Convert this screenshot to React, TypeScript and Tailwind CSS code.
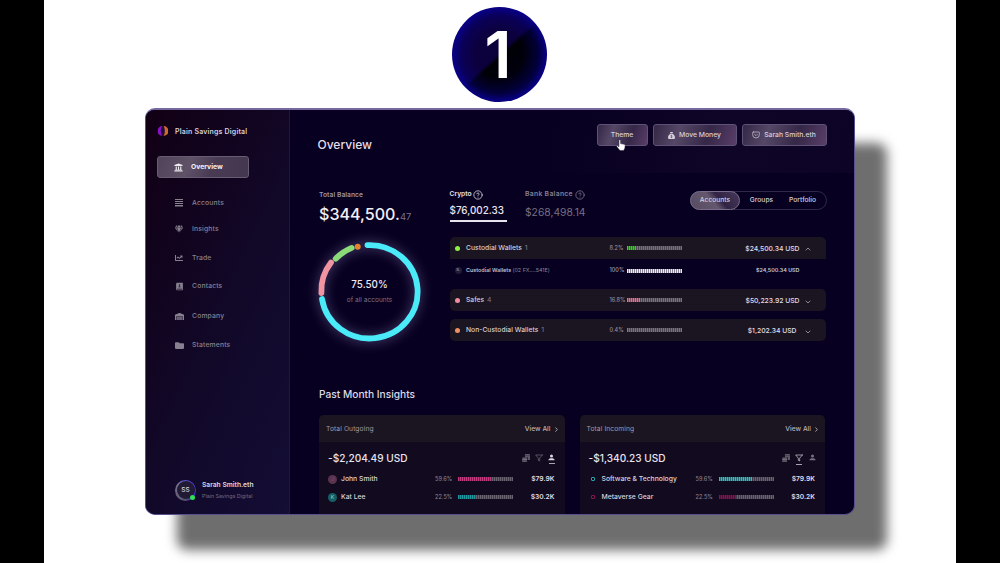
import React, { useState } from 'react';
import { FaChartLine, FaFolder, FaGem, FaUniversity, FaWarehouse } from 'react-icons/fa';
import { FaSackDollar } from 'react-icons/fa6';
import { RiContactsBook2Fill } from 'react-icons/ri';
import { FiFilter, FiPocket } from 'react-icons/fi';
import { ChevronDown, ChevronRight, ChevronUp, CircleHelp } from 'lucide-react';

// ==================== ICONS ====================
const LinesIcon = () => (
  <svg viewBox="0 0 8 8" className="h-[8px] w-[8px] shrink-0" fill="currentColor">
    <rect y="0" width="8" height="1" />
    <rect y="2" width="8" height="1" />
    <rect y="4" width="8" height="1" />
    <rect y="6" width="8" height="1" />
    <rect y="7.500" width="8" height="0.500" />
  </svg>
);

const CoinsIcon = ({ className }) => (
  <svg viewBox="0 0 16 16" className={className} fill="currentColor">
    <rect x="5.500" y="0.500" width="10.500" height="2.600" rx="1.300" />
    <path d="M6 3.500h10v8.500h-4.500V6.500H6z" opacity="0.75" />
    <rect x="0.500" y="7" width="10" height="2.400" rx="1.200" />
    <rect x="0" y="9.900" width="10.500" height="2.400" rx="1.200" />
    <rect x="0" y="12.900" width="10.500" height="2.600" rx="1.300" />
  </svg>
);

const PersonIcon = ({ className }) => (
  <svg viewBox="0 0 16 16" className={className} fill="currentColor">
    <circle cx="8" cy="4.500" r="3.500" />
    <path d="M1 14c0-3 3-4.500 7-4.500s7 1.500 7 4.500z" />
  </svg>
);

const HandCursor = () => (
  <svg viewBox="0 0 16 20" className="absolute left-[18px] top-[14px] h-[12px] w-[10px]">
    <path
      d="M5 1.500c1-.800 2.300 0 2.300 1.200v5l6 1.200c1.200.300 1.800 1.200 1.700 2.400l-.800 4.700L12.500 19H6.300L1 12.800c-.500-1 .600-2 1.600-1.400L4.600 13V2.600c0-.500.100-.800.400-1.100z"
      fill="#fff"
      stroke="#2b1c3c"
      strokeWidth="0.8"
    />
  </svg>
);

const Logo = () => (
  <svg viewBox="0 0 20 20" className="h-[10px] w-[10px]">
    <circle cx="10" cy="10" r="9" fill="#1d0c3c" />
    <path d="M9 0A10 10 0 0 0 9 20C4.500 15 4.500 5 9 0z" fill="#8a12c4" />
    <path d="M11 0a10 10 0 0 1 0 20c3.500-5 3.500-15 0-20z" fill="#cf6a2c" />
  </svg>
);

// ==================== DATA ====================
const navItems = [
  { name: 'Accounts', icon: LinesIcon, size: 8, space: 'mt-[19px]' },
  { name: 'Insights', icon: FaGem, size: 8, space: 'mt-[14px]' },
  { name: 'Trade', icon: FaChartLine, size: 8, space: 'mt-[17px]' },
  { name: 'Contacts', icon: RiContactsBook2Fill, size: 9, space: 'mt-4' },
  { name: 'Company', icon: FaWarehouse, size: 9, space: 'mt-[18px]' },
  { name: 'Statements', icon: FaFolder, size: 9, space: 'mt-[17px]' },
];

const wallets = [
  { name: 'Custodial Wallets', count: 1, percent: 8.2, fill: 18, dot: 'bg-[#8df046]', bar: 'bg-[#35d321]', amount: '$24,500.34 USD' },
  { name: 'Safes', count: 4, percent: 16.8, fill: 25, dot: 'bg-[#f08ba0]', bar: 'bg-[#dd7492]', amount: '$50,223.92 USD' },
  { name: 'Non-Custodial Wallets', count: 1, percent: 0.4, fill: 3, dot: 'bg-[#ee8f62]', bar: 'bg-[#a0706a]', amount: '$1,202.34 USD' },
];

const insights = [
  {
    title: 'Total Outgoing',
    amount: '-$2,204.49 USD',
    active: 'person',
    rows: [
      { name: 'John Smith', initial: 'J', badge: 'bg-[#59344f] text-[#b0356b]', percent: '59.6%', fill: 60, bar: 'bg-[#bf3b7c]', value: '$79.9K' },
      { name: 'Kat Lee', initial: 'K', badge: 'bg-[#155f62] text-[#8fd6d0]', percent: '22.5%', fill: 33, bar: 'bg-[#2097a0]', value: '$30.2K' },
    ],
  },
  {
    title: 'Total Incoming',
    amount: '-$1,340.23 USD',
    active: 'filter',
    rows: [
      { name: 'Software & Technology', ring: 'border-[#27a3a8]', percent: '59.6%', fill: 61, bar: 'bg-[#37bdbb]', value: '$79.9K' },
      { name: 'Metaverse Gear', ring: 'border-[#8a1450]', percent: '22.5%', fill: 32, bar: 'bg-[#86124e]', value: '$30.2K' },
    ],
  },
];

// ==================== SMALL PARTS ====================
const TickBar = ({ fill, color, rest = 'bg-[#77717e]' }) => (
  <div className="flex h-[4px] w-[55px] mask-[repeating-linear-gradient(90deg,#000_0_1px,rgba(0,0,0,0.55)_1px_2px)]">
    <div className={color} style={{ width: `${fill}%` }} />
    <div className={`flex-1 ${rest}`} />
  </div>
);

const Donut = () => (
  <div className="relative h-[120px] w-[120px]">
    <svg viewBox="0 0 120 120" className="h-full w-full overflow-visible" fill="none">
      <defs>
        <filter id="glow" x="-30%" y="-30%" width="160%" height="160%">
          <feGaussianBlur stdDeviation="6" />
        </filter>
      </defs>
      <ellipse cx="60.400" cy="61" rx="48" ry="47" stroke="#a090d0" strokeOpacity="0.5" strokeWidth="6" filter="url(#glow)" />
      <g strokeWidth="5.800" strokeLinecap="round">
        <path d="M58.500 14.100A48.100 46.700 0 1 1 13 68" stroke="#4beaf8" />
        <path d="M12.400 62A48.100 46.700 0 0 1 22 31.500" stroke="#f094a2" />
        <path d="M26.700 27.700A48.100 46.700 0 0 1 42.700 16.900" stroke="#8bdc79" />
      </g>
      <circle cx="48.700" cy="15.700" r="3" fill="#e5822c" />
    </svg>
    <div className="absolute inset-0 flex flex-col items-center pt-[48px] pl-px">
      <span className="text-[9.8px] leading-[12px] font-medium text-[#eeeaf4]">75.50%</span>
      <span className="mt-[5px] text-[6.6px] leading-[9px] text-[#77708a]">of all accounts</span>
    </div>
  </div>
);

// ==================== SIDEBAR ====================
const Sidebar = () => (
  <aside className="flex w-[144px] shrink-0 flex-col border-r border-[#1f1838] bg-[linear-gradient(115deg,#120014_0%,#11041f_30%,#120a2c_65%,#140d34_100%)]">
    <div className="mt-[15px] ml-[12px] flex h-[12px] items-center gap-[7px]">
      <Logo />
      <span className="text-[7px] font-semibold tracking-[0.19px] text-[#d5cfda]">Plain Savings Digital</span>
    </div>

    <button className="mt-[19px] ml-[11px] flex h-[22px] w-[92px] items-center gap-[8px] rounded-[3px] border border-[#665d72] bg-[linear-gradient(115deg,#51445a_0%,#5f5267_35%,#493b54_60%,#43364f_100%)] pl-[16px]">
      <FaUniversity size={9} className="text-[#eeeaf1]" />
      <span className="pt-px text-[6.8px] font-bold text-[#f2eff5]">Overview</span>
    </button>

    <nav className="ml-[29px]">
      {navItems.map((item) => (
        <a key={item.name} className={`flex h-[12px] items-center gap-[9px] text-[#86808f] ${item.space}`}>
          <span className="flex w-[8px] justify-center">
            <item.icon size={item.size} className="shrink-0" />
          </span>
          <span className="pt-px text-[6.8px] font-medium tracking-[0.15px]">{item.name}</span>
        </a>
      ))}
    </nav>

    <div className="mt-auto mb-[13px] ml-[29px] flex items-center gap-[6px]">
      <div className="relative flex h-[21px] w-[21px] items-center justify-center rounded-full bg-[conic-gradient(#5a4fd0_0deg,#3b22c8_130deg,#55506a_180deg,#77728a_300deg,#5a4fd0_360deg)]">
        <div className="flex h-[18px] w-[18px] items-center justify-center rounded-full bg-[#211a35] text-[6.5px] font-medium text-[#d8d4de]">
          SS
        </div>
        <span className="absolute right-[1px] bottom-[1px] h-[5px] w-[5px] rounded-full bg-[#2fe05a]" />
      </div>
      <div className="flex flex-col">
        <span className="pt-px text-[6.7px] leading-[11px] font-semibold text-[#dcd8e2]">Sarah Smith.eth</span>
        <span className="mt-[1px] text-[5.3px] leading-[9px] text-[#6f6a82]">Plain Savings Digital</span>
      </div>
    </div>
  </aside>
);

// ==================== WALLET LIST ====================
const WalletRow = ({ wallet, open, onToggle }) => (
  <div
    onClick={onToggle}
    className={`flex h-[22px] items-center bg-[#1b1522] pr-[14px] pl-[5px] ${open ? 'rounded-t-[5px]' : 'rounded-[5px]'}`}
  >
    <span className={`h-[5px] w-[5px] rounded-full ${wallet.dot}`} />
    <div className="ml-[6.5px] w-[143.5px] pt-px text-[6.7px] font-medium tracking-[0.05px] whitespace-nowrap text-[#d6d1db]">
      {wallet.name} <span className="ml-[1px] text-[#77717f]">{wallet.count}</span>
    </div>
    <span className="w-[17px] pt-px text-[5.5px] font-medium text-[#938d9b]">{wallet.percent}%</span>
    <TickBar fill={wallet.fill} color={wallet.bar} />
    <span className="ml-auto pt-[2px] text-[6.8px] font-medium text-[#e2dfe8]">{wallet.amount}</span>
    {open ? (
      <ChevronUp size={8} strokeWidth={2.4} className="mt-[2px] ml-[4px] text-[#aaa4b3]" />
    ) : (
      <ChevronDown
        size={8}
        strokeWidth={2.4}
        className={`mt-[4px] text-[#aaa4b3] ${wallet.percent < 1 ? 'ml-[7px]' : 'ml-[4px]'}`}
      />
    )}
  </div>
);

const WalletDetail = () => (
  <div className="flex h-[23px] items-center pr-[26px] pl-[5px]">
    <span className="flex h-[7px] w-[7px] items-center justify-center rounded-full bg-[#221c36] text-[3px] text-[#b5b0bd]">SL</span>
    <div className="ml-[4.5px] w-[143.5px] text-[5.4px] font-semibold whitespace-nowrap text-[#c3bfcb]">
      Custodial Wallets <span className="font-normal text-[#8a8496]">(02 FX....541E)</span>
    </div>
    <span className="w-[17px] text-[5.5px] font-medium text-[#a39dab]">100%</span>
    <TickBar fill={100} color="bg-[#f1eef3]" />
    <span className="ml-auto text-[5.4px] font-semibold text-[#cbc7d3]">$24,500.34 USD</span>
  </div>
);

// ==================== INSIGHT CARD ====================
const InsightCard = ({ card }) => {
  const iconClass = (name) =>
    `flex h-[11px] w-[8px] flex-col items-center ${
      card.active === name ? 'text-[#dcd8e2]' : 'text-[#77717f]'
    }`;

  return (
    <div className="h-[110px] w-[245.5px] rounded-t-[5px] bg-[#120a1e]">
      <div className="flex h-[27px] items-center justify-between rounded-t-[5px] bg-[#1a1520] pt-[2px] pr-[5px] pl-[7px] text-[6.7px]">
        <span className="tracking-[0.1px] text-[#a09aa8]">{card.title}</span>
        <span className="flex items-center gap-[2px] font-medium text-[#b8b3bf]">
          View All <ChevronRight size={7} strokeWidth={3} className="mb-px" />
        </span>
      </div>
      <div className="flex h-[32px] items-center justify-between px-[9px]">
        <span className="pt-px text-[10.1px] font-medium text-[#e8e4ee]">{card.amount}</span>
        <div className="flex items-center gap-[5px] pt-[3px]">
          <div className={iconClass('coins')}>
            <CoinsIcon className="h-[8px] w-[8px] shrink-0" />
          </div>
          <div className={iconClass('filter')}>
            <FiFilter size={8} className="shrink-0" />
            {card.active === 'filter' && <span className="mt-[2px] h-px w-[6px] shrink-0 bg-[#a9a4b2]" />}
          </div>
          <div className={iconClass('person')}>
            <PersonIcon className="h-[7px] w-[7px] shrink-0" />
            {card.active === 'person' && <span className="mt-[2px] h-px w-[6px] shrink-0 bg-[#a9a4b2]" />}
          </div>
        </div>
      </div>
      <div className="-mt-[4px]">
        {card.rows.map((row) => (
          <div key={row.name} className="flex h-[18px] items-center pr-[10px] pl-[9px]">
            {row.initial ? (
              <span className={`flex h-[9px] w-[9px] items-center justify-center rounded-full text-[5px] ${row.badge}`}>
                {row.initial}
              </span>
            ) : (
              <span className="flex w-[9px] pl-[2px]">
                <span className={`h-[4px] w-[4px] rounded-[1px] border ${row.ring}`} />
              </span>
            )}
            <span className="ml-[4px] w-[94px] pt-[1.5px] text-[6.8px] font-medium whitespace-nowrap text-[#d8d4de]">
              {row.name}
            </span>
            <span className="w-[23px] pt-[1.5px] text-[5.5px] font-medium text-[#868090]">{row.percent}</span>
            <TickBar fill={row.fill} color={row.bar} rest="bg-[#68626f]" />
            <span className="ml-auto text-[6.7px] font-semibold text-[#e2dfe8]">{row.value}</span>
          </div>
        ))}
      </div>
    </div>
  );
};

// ==================== MAIN COMPONENT ====================
export default function SavingsOverview() {
  const [tab, setTab] = useState('Accounts');
  const [open, setOpen] = useState(true);

  const actionClass =
    'relative flex h-[22px] items-center justify-center gap-[4px] rounded-[3px] border border-[#5f5279] bg-[linear-gradient(110deg,#332746_0%,#554866_30%,#352747_65%,#593e69_100%)] pr-px text-[6.8px] font-medium text-[#d6d0dc]';

  return (
    <div className="flex h-[563px] w-[1000px] justify-center overflow-hidden bg-black font-['Inter',sans-serif] leading-none">
      <div className="flex w-[912px] flex-col items-center bg-white">
        <div className="mt-[7px] mr-px flex h-[95px] w-[95px] shrink-0 items-center justify-center rounded-full bg-[radial-gradient(circle,transparent_35%,#08008a_100%),linear-gradient(138deg,#0b0140_0%,#0c003c_49%,#000006_52%,#02001c_100%)] pr-[3px] shadow-[inset_0_0_7px_3px_#0a0090]">
          <span className="text-[64px] font-semibold text-white">1</span>
        </div>

        <div className="mt-[6px] flex h-[407px] w-[710px] shrink-0 overflow-hidden rounded-[10px] border border-t-2 border-[#57508c] border-t-[#75699f] bg-[#070020] shadow-[32px_35px_12px_0_rgba(0,0,0,0.57)]">
          <Sidebar />

          <main className="flex-1">
            <header className="flex h-[63px] justify-between bg-[linear-gradient(100deg,#070020_45%,#0f0526_75%,#0d0326_100%)] pr-[27px] pl-[27.5px]">
              <h1 className="mt-[28px] text-[12px] leading-[14px] font-medium text-[#e3dfe8]">Overview</h1>
              <div className="mt-[14px] flex gap-[5px]">
                <button className={`${actionClass} w-[51px]`}>
                  Theme
                  <HandCursor />
                </button>
                <button className={`${actionClass} w-[84px]`}>
                  <FaSackDollar size={7} /> Move Money
                </button>
                <button className={`${actionClass} w-[85px]`}>
                  <FiPocket size={8} /> Sarah Smith.eth
                </button>
              </div>
            </header>

            <section className="flex h-[206px] pt-[16px] pl-[29px]">
              <div className="w-[130px]">
                <p className="pt-px text-[6.7px] leading-[11px] font-semibold tracking-[0.05px] text-[#9b95a5]">Total Balance</p>
                <p className="mt-[4px] text-[16.1px] leading-[18px] font-medium whitespace-nowrap text-[#f2eff6]">
                  $344,500.<span className="text-[9.5px] font-normal text-[#77708a]">47</span>
                </p>
                <div className="mt-[5px] -ml-[10px]">
                  <Donut />
                </div>
              </div>

              <div className="w-[377px]">
                <div className="flex h-[48px]">
                  <div className="w-[58px] pl-[0.5px]">
                    <p className="flex h-[11px] items-center gap-[1px] text-[6.7px] font-semibold text-[#e8e4ee]">
                      Crypto <CircleHelp size={10} strokeWidth={1.8} />
                    </p>
                    <p className="mt-[4px] text-[9.9px] leading-[12px] font-medium text-[#e8e4ee]">$76,002.33</p>
                    <div className="mt-[4px] h-[1.5px] w-[57px] bg-[#e8e4ee]" />
                  </div>
                  <div className="ml-[18px]">
                    <p className="flex h-[11px] items-center gap-[2px] text-[6.8px] font-semibold tracking-[0.3px] text-[#858091]">
                      Bank Balance <CircleHelp size={10} strokeWidth={1.8} />
                    </p>
                    <p className="mt-[6px] text-[10.3px] leading-[12px] text-[#777084]">$268,498.14</p>
                  </div>
                  <div className="mt-[2px] -mr-px ml-auto flex h-[19px] w-[137px] rounded-full border border-[#30294a] pr-[4px] text-[6.7px] font-medium">
                    {['Accounts', 'Groups', 'Portfolio'].map((name) => (
                      <button
                        key={name}
                        onClick={() => setTab(name)}
                        className={`-my-px rounded-full text-[#d6d1db] ${
                          tab === name
                            ? '-ml-px w-[50px] border border-[#786c8a] bg-[linear-gradient(50deg,#564a61_0%,#64586f_45%,#302343_60%,#47395a_100%)]'
                            : 'flex-1 pl-[2px]'
                        }`}
                      >
                        {name}
                      </button>
                    ))}
                  </div>
                </div>

                <div className="flex flex-col pr-[0.5px] pl-[0.5px]">
                  <WalletRow wallet={wallets[0]} open={open} onToggle={() => setOpen(!open)} />
                  {open && <WalletDetail />}
                  <div className="mt-[7px] flex flex-col gap-[8px]">
                    <WalletRow wallet={wallets[1]} />
                    <WalletRow wallet={wallets[2]} />
                  </div>
                </div>
              </div>
            </section>

            <section className="pl-[29px]">
              <h2 className="pt-[8px] text-[10.2px] leading-[14px] font-medium text-[#dedae4]">Past Month Insights</h2>
              <div className="mt-[14px] flex gap-[15px]">
                {insights.map((card) => (
                  <InsightCard key={card.title} card={card} />
                ))}
              </div>
            </section>
          </main>
        </div>
      </div>
    </div>
  );
}
